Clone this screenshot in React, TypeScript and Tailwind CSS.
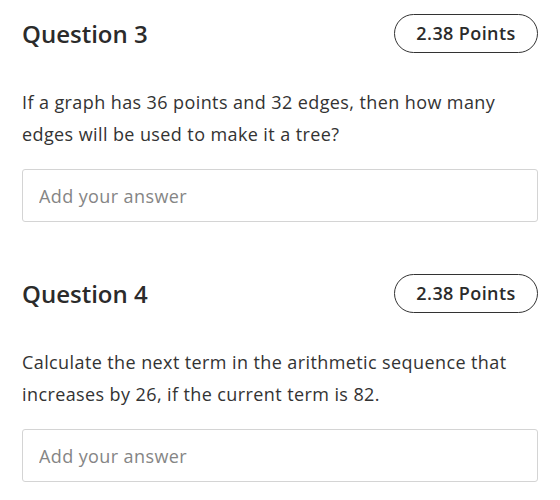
import React from "react"

interface QuestionProps {
  title: string
  points: string
  text: string
}

function Question({ title, points, text }: QuestionProps) {
  return (
    <section>
      <div className="flex h-[39px] items-center justify-between">
        <h2 className="text-[24px] font-semibold leading-none text-[#2b2b2b]">{title}</h2>
        <span className="flex h-[39px] w-[144px] items-center justify-center rounded-full border-[1.5px] border-[#333] text-[18px] font-semibold tracking-[0.4px] text-[#2b2b2b]">
          {points}
        </span>
      </div>
      <p className="mt-[33px] text-[18px] leading-[32px] tracking-[0.4px] text-[#333]">{text}</p>
      <input
        type="text"
        placeholder="Add your answer"
        className="mt-[19px] block h-[53px] w-full rounded-[3px] border border-[#d4d4d4] bg-white px-4 text-[18px] tracking-[0.4px] text-[#333] outline-none placeholder:text-[#858585]"
      />
    </section>
  )
}

export default function App() {
  return (
    <div
      className="min-h-[500px] w-[560px] bg-white px-[22px] pt-[14px]"
      style={{ fontFamily: '"Open Sans", "Noto Sans", sans-serif' }}
    >
      <div className="flex flex-col gap-[52px]">
        <Question
          title="Question 3"
          points="2.38 Points"
          text="If a graph has 36 points and 32 edges, then how many edges will be used to make it a tree?"
        />
        <Question
          title="Question 4"
          points="2.38 Points"
          text="Calculate the next term in the arithmetic sequence that increases by 26, if the current term is 82."
        />
      </div>
    </div>
  )
}
